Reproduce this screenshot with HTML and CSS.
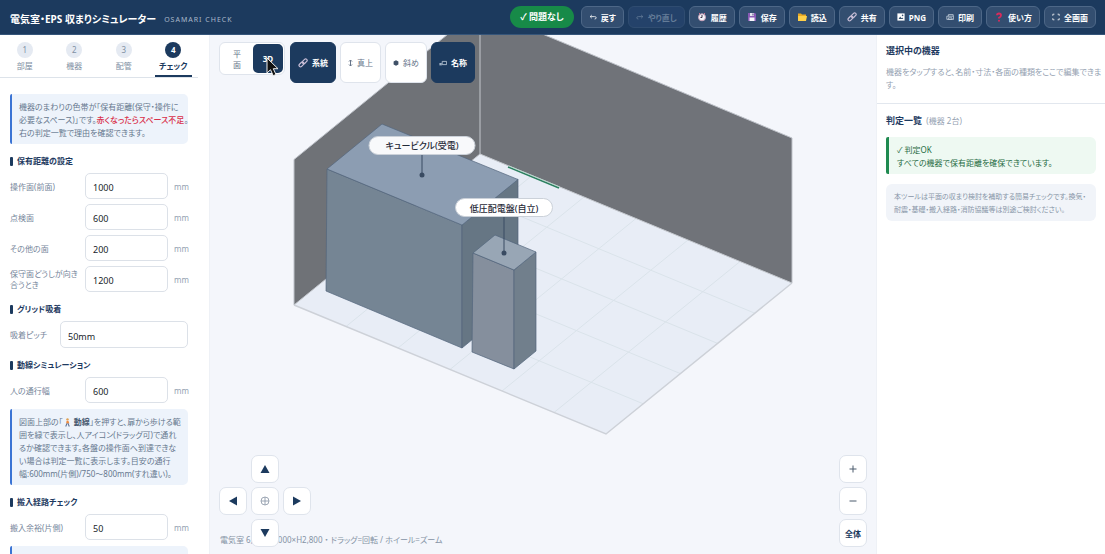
FILE: index.html
```html
<!DOCTYPE html>
<html lang="ja">
<head>
<meta charset="utf-8">
<meta name="viewport" content="width=device-width, initial-scale=1">
<title>電気室・EPS 収まりシミュレーター</title>
<link rel="stylesheet" href="styles.css">
</head>
<body>
<header class="topbar">
  <h1 class="title">電気室・EPS 収まりシミュレーター</h1>
  <span class="subtitle">OSAMARI CHECK</span>
  <span class="status">✓ 問題なし</span>
  <nav class="actions">
    <button class="action" type="button"><svg class="ico small" viewBox="0 0 10 10"><path d="M3.500 2.500 1.500 4.500l2 2M1.500 4.500H7q2 0 2 1.500T7 7.500" fill="none" stroke="currentColor"/></svg>戻す</button>
    <button class="action" type="button" disabled><svg class="ico small" viewBox="0 0 10 10"><path d="M6.500 2.500l2 2-2 2M8.500 4.500H3q-2 0-2 1.500T3 7.500" fill="none" stroke="currentColor"/></svg>やり直し</button>
    <button class="action" type="button"><svg class="ico" viewBox="0 0 10 10"><circle cx="5" cy="5.300" r="3.500" fill="#f4f4f8" stroke="#c9a2ba"/><path d="M5 3v2.500H3.500" fill="none" stroke="#3b3046"/><path d="M2 2l1-1M8 2 7 1" stroke="#d5718c"/></svg>履歴</button>
    <button class="action" type="button"><svg class="ico" viewBox="0 0 10 10"><path d="M1 1h7l1 1v7H1z" fill="#8a5bb5"/><path d="M3 1h4v3H3z" fill="#e4e6f0"/><path d="M2.500 5.500h5V9h-5z" fill="#f7f7fb"/><path d="M5.500 1.500h1v2h-1z" fill="#4a3a78"/></svg>保存</button>
    <button class="action" type="button"><svg class="ico" viewBox="0 0 10 10"><path d="M1 1.500h3l1 1h4V9H1z" fill="#e9a823"/><path d="M1 4h9L9 9H1z" fill="#ffcf48"/></svg>読込</button>
    <button class="action" type="button"><svg class="ico" viewBox="0 0 10 10"><g fill="none" stroke="#c8bed7" stroke-width="1.200"><rect x="4" y="1.800" width="5.500" height="3" rx="1.500" transform="rotate(-45 6.700 3.300)"/><rect x=".7" y="5" width="5.500" height="3" rx="1.500" transform="rotate(-45 3.400 6.500)"/></g></svg>共有</button>
    <button class="action" type="button"><svg class="ico small" viewBox="0 0 10 10"><path d="M.5 .5h9v9h-9z" fill="#fff"/><path d="M2 7.500l2-3 1.500 2 1-1 1.500 2z" fill="#34506f"/><circle cx="7" cy="3" r="1" fill="#34506f"/></svg>PNG</button>
    <button class="action" type="button"><svg class="ico small" viewBox="0 0 10 10"><path d="M3 4V2h6v2M1 4h8.500v4H1zM3 6h4.500v2H3z" fill="none" stroke="#c4cfdc"/></svg>印刷</button>
    <button class="action" type="button"><svg class="ico" viewBox="0 0 10 10"><path d="M3 3.300Q3 1.500 5 1.500t2 1.800T5 5.800v.7" fill="none" stroke="#d92b5c" stroke-width="1.800"/><circle cx="5" cy="8.700" r="1" fill="#d92b5c"/></svg>使い方</button>
    <button class="action" type="button"><svg class="ico small" viewBox="0 0 10 10"><path d="M1 3.500V1.500h2M7 1.500h2v2M9 6.500v2H7M3 8.500H1v-2" fill="none" stroke="currentColor"/></svg>全画面</button>
  </nav>
</header>

<div class="workspace">
  <aside class="sidebar">
    <nav class="steps">
      <a class="step" href="#room"><span class="num">1</span>部屋</a>
      <a class="step" href="#equipment"><span class="num">2</span>機器</a>
      <a class="step" href="#piping"><span class="num">3</span>配管</a>
      <a class="step current" href="#check"><span class="num">4</span>チェック</a>
    </nav>
    <div class="settings" id="check">
      <p class="note intro">機器のまわりの色帯が「保有距離(保守・操作に<br>必要なスペース)」です。<span class="alert">赤くなったらスペース不足</span>。<br>右の判定一覧で理由を確認できます。</p>
      <h2 class="section">保有距離の設定</h2>
      <div class="fields">
        <div class="field"><label for="front">操作面(前面)</label><input id="front" type="text" value="1000"><span class="unit">mm</span></div>
        <div class="field"><label for="inspect">点検面</label><input id="inspect" type="text" value="600"><span class="unit">mm</span></div>
        <div class="field"><label for="other">その他の面</label><input id="other" type="text" value="200"><span class="unit">mm</span></div>
        <div class="field"><label for="facing">保守面どうしが向き合うとき</label><input id="facing" type="text" value="1200"><span class="unit">mm</span></div>
      </div>
      <h2 class="section">グリッド吸着</h2>
      <div class="field wide"><label for="pitch">吸着ピッチ</label><select id="pitch"><option>50mm</option></select></div>
      <h2 class="section">動線シミュレーション</h2>
      <div class="field"><label for="person">人の通行幅</label><input id="person" type="text" value="600"><span class="unit">mm</span></div>
      <p class="note after">図面上部の「<svg class="walker" viewBox="0 0 10 10"><circle cx="5" cy="1.500" r="1.300" fill="#e0a050"/><path d="M4 3h2l1 3H3.500z" fill="#f08a3c"/><path d="M4.500 6 3 9.500M5.500 6 7 9.500" stroke="#5b6f95" stroke-width="1.200"/></svg> <strong>動線</strong>」を押すと、扉から歩ける範囲を緑で表示し、人アイコン(ドラッグ可)で通れるか確認できます。各盤の操作面へ到達できない場合は判定一覧に表示します。目安の通行幅:600mm(片側)/750〜800mm(すれ違い)。</p>
      <h2 class="section">搬入経路チェック</h2>
      <div class="field"><label for="margin">搬入余裕(片側)</label><input id="margin" type="text" value="50"><span class="unit">mm</span></div>
      <div class="note after"></div>
    </div>
  </aside>

  <main class="stage">
    <svg class="scene" viewBox="0 0 666 519" preserveAspectRatio="xMidYMid slice" role="img" aria-label="電気室の3D表示">
      <g transform="translate(-210 -35)">
        <path d="M480 154 792 283 606 434 294 305z" fill="#e8edf6"/>
        <path d="M532 175.500 346 326.500M584 197 398 348M636 218.500 450 369.500M688 240 502 391M740 261.500 554 412.500M442.800 184.200 754.800 313.200M405.600 214.400 717.600 343.400M368.400 244.600 680.400 373.600M331.200 274.800 643.200 403.800" stroke="#dae3ea" fill="none"/>
        <path d="M294 305 606 434 792 283" fill="none" stroke="#cdd1d8" stroke-width="1.500"/>
        <path d="M480 8 294 159.500V305L480 154z" fill="#6f7277"/>
        <path d="M480 8 792 138V283L480 154z" fill="#707379"/>
        <path d="M294 305V159.500L480 8 792 138V283" fill="none" stroke="#bfc3ca"/>
        <path d="M480 8V154L792 283M480 154 294 305" fill="none" stroke="#c4c8ce"/>
        <path d="M508 167 559 188" stroke="#2c8060" stroke-width="1.500"/>
        <path d="M509 166 560 187" stroke="#b4dccb" stroke-width=".7"/>
        <g stroke="#53667c" stroke-width=".7" stroke-linejoin="round">
          <path d="M327 169 462 225V348L326 291z" fill="#758594"/>
          <path d="M462 225 518 179V302L462 348z" fill="#667684"/>
          <path d="M382 124 518 179.500 462 225 327 169z" fill="#8c9db2"/>
          <path d="M473 253 514 270V369L472 352z" fill="#858f9d"/>
          <path d="M514 270 536 252V351L514 369z" fill="#717f8c"/>
          <path d="M495 235 536 252 514 270 473 253z" fill="#98a6b5"/>
        </g>
        <path d="M422 154V175M504 216V253" stroke="#394b62"/>
        <circle cx="422" cy="175" r="2.500" fill="#394b62"/>
        <circle cx="504" cy="253" r="2.500" fill="#394b62"/>
        <rect x="369" y="136.500" width="106" height="18" rx="9" fill="#f8f9fb" stroke="#cbd1d9"/>
        <rect x="455.500" y="198.500" width="97" height="18" rx="9" fill="#fff" stroke="#cbd1d9"/>
        <text class="tag" x="422" y="149">キュービクル(受電)</text>
        <text class="tag" x="504" y="212">低圧配電盤(自立)</text>
      </g>
    </svg>

    <div class="viewbar">
      <div class="segment">
        <button class="seg" type="button">平面</button>
        <button class="seg on" type="button">3D</button>
      </div>
      <button class="view on" type="button"><svg class="ico" viewBox="0 0 10 10"><g fill="none" stroke="#c8bed7" stroke-width="1.200"><rect x="4" y="1.800" width="5.500" height="3" rx="1.500" transform="rotate(-45 6.700 3.300)"/><rect x=".7" y="5" width="5.500" height="3" rx="1.500" transform="rotate(-45 3.400 6.500)"/></g></svg>系統</button>
      <button class="view" type="button"><svg class="ico thin" viewBox="0 0 5 10"><path d="M2.500 2v6M1 3.500 2.500 2 4 3.500M1 6.500 2.500 8 4 6.500" fill="none" stroke="currentColor"/></svg>真上</button>
      <button class="view" type="button"><svg class="ico dot" viewBox="0 0 10 10"><path d="M5 .5 9 2.700V7.300L5 9.500 1 7.300V2.700z" fill="#3f5067"/></svg>斜め</button>
      <button class="view on" type="button"><svg class="ico small" viewBox="0 0 10 10"><path d="M4 3h5.500v4H4z" fill="none" stroke="#c4cfdc"/><path d="M.5 5h3v3h-3z" fill="#9eb0c4"/></svg>名称</button>
    </div>
    <svg class="cursor" viewBox="0 0 14 20"><path d="M1 1v15l3.500-3.300 2.700 6 2.800-1.200-2.700-5.800H12z" fill="#111" stroke="#eee"/></svg>

    <p class="hint">電気室 6,000×5,000×H2,800 ・ ドラッグ=回転 / ホイール=ズーム</p>
    <div class="pad">
      <button class="key up" type="button" aria-label="上"><svg viewBox="0 0 10 10"><path d="M5 1 9.500 9h-9z" fill="currentColor"/></svg></button>
      <button class="key left" type="button" aria-label="左"><svg viewBox="0 0 10 10"><path d="M1 5l8-4.500v9z" fill="currentColor"/></svg></button>
      <button class="key mid" type="button" aria-label="中央"><svg viewBox="0 0 10 10"><path d="M5 1v8M1 5h8" stroke="#8793a3" stroke-width=".8"/><circle cx="5" cy="5" r="4" fill="none" stroke="#8793a3" stroke-width=".8"/></svg></button>
      <button class="key right" type="button" aria-label="右"><svg viewBox="0 0 10 10"><path d="M9 5 1 .5v9z" fill="currentColor"/></svg></button>
      <button class="key down" type="button" aria-label="下"><svg viewBox="0 0 10 10"><path d="M5 9 .5 1h9z" fill="currentColor"/></svg></button>
    </div>
    <div class="zoom">
      <button class="key" type="button" aria-label="拡大"><svg viewBox="0 0 10 10"><path d="M5 1.500v7M1.500 5h7" stroke="#4b5a6d"/></svg></button>
      <button class="key" type="button" aria-label="縮小"><svg viewBox="0 0 10 10"><path d="M1.500 5h7" stroke="#4b5a6d"/></svg></button>
      <button class="key" type="button">全体</button>
    </div>
  </main>

  <aside class="inspector">
    <section class="block">
      <h2 class="heading">選択中の機器</h2>
      <p class="empty">機器をタップすると、名前・寸法・各面の種類をここで編集できます。</p>
    </section>
    <section class="block">
      <h2 class="heading">判定一覧 <span class="count">(機器 2台)</span></h2>
      <p class="verdict">✓ 判定OK<br>すべての機器で保有距離を確保できています。</p>
      <p class="disclaimer">本ツールは平面の収まり検討を補助する簡易チェックです。換気・耐震・基礎・搬入経路・消防協議等は別途ご検討ください。</p>
    </section>
  </aside>
</div>
</body>
</html>
```

FILE: styles.css
```css
* { box-sizing: border-box; }

body {
  margin: 0;
  height: 100vh;
  display: flex;
  flex-direction: column;
  overflow: hidden;
  background: #fff;
  color: #1e3a5f;
  font-family: "Noto Sans", "Noto Sans CJK JP", sans-serif;
  font-size: 8px;
  line-height: 13px;
  font-feature-settings: "palt";
}

h1, h2, p { margin: 0; }

button, input, select {
  font: inherit;
  font-feature-settings: inherit;
  color: inherit;
}

svg { flex: none; }

.topbar {
  display: flex;
  align-items: center;
  flex: none;
  height: 35px;
  padding: 0 9px 0 10px;
  background: #1c3a5e;
  border-bottom: 1px solid #35557a;
  color: #fff;
  white-space: nowrap;
}
.title { padding-top: 4px; font-size: 10px; line-height: 16px; font-weight: 700; }
.subtitle { margin-left: 8px; padding-top: 4px; font-size: 7px; letter-spacing: 1px; color: #a9b8ca; }
.status {
  margin-left: auto;
  margin-right: 7px;
  padding: 0 10px;
  border-radius: 11px;
  background: #178a48;
  font-size: 9px;
  line-height: 22px;
  font-weight: 700;
}
.actions { display: flex; gap: 4px; }
.action {
  display: flex;
  align-items: center;
  gap: 4px;
  height: 22px;
  padding: 0 7px;
  border: 1px solid #4d6787;
  border-radius: 6px;
  background: #334e70;
  color: #fff;
  font-weight: 700;
}
.action:disabled { background: #24426a; border-color: #2f4c70; color: #647c98; }
.ico { width: 10px; height: 10px; }
.ico.small { width: 8px; height: 8px; }
.ico.dot { width: 6px; height: 6px; }
.ico.thin { width: 5px; height: 10px; }

.workspace { flex: 1; min-height: 0; display: flex; }

.sidebar {
  flex: none;
  width: 210px;
  padding-right: 11px;
  border-right: 1px solid #eef1f6;
  overflow: hidden;
}
.steps {
  display: grid;
  grid-template-columns: repeat(4, 1fr);
  border-bottom: 1px solid #dde3ea;
}
.step {
  display: flex;
  flex-direction: column;
  align-items: center;
  gap: 1px;
  height: 42px;
  margin: 0 6px;
  padding-top: 7px;
  border-bottom: 2px solid transparent;
  color: #8090a3;
  text-decoration: none;
  white-space: nowrap;
}
.num {
  width: 16px;
  border-radius: 8px;
  background: #e5eaf2;
  line-height: 16px;
  text-align: center;
}
.step.current { color: #1c3a5e; border-color: #1c3a5e; font-weight: 700; }
.step.current .num { background: #1c3a5e; color: #fff; }

.settings { padding: 16px 10px 0; }
.note {
  padding: 6px 7px 5px;
  border-left: 2px solid #3b74d4;
  border-radius: 2px 5px 5px 2px;
  background: #edf3fb;
  color: #66788e;
}
.note.intro { white-space: nowrap; }
.note.after { min-height: 50px; margin-top: 6px; }
.note strong { color: #45586f; }
.note .alert { color: #d9304a; font-weight: 500; }
.walker { width: 9px; height: 9px; vertical-align: -2px; }

.section {
  display: flex;
  align-items: center;
  gap: 4px;
  margin: 11px 0 6px;
  font-size: 8px;
  line-height: 12px;
  font-weight: 700;
}
.section::before { content: ""; width: 3px; height: 9px; border-radius: 1px; background: #1c3a5e; }

.fields { display: grid; gap: 5px; }
.field {
  display: grid;
  grid-template-columns: 69px 1fr 14px;
  gap: 6px;
  align-items: center;
  color: #75859a;
  line-height: 11px;
}
.field.wide { grid-template-columns: 44px 1fr; }
.field input, .field select {
  appearance: none;
  width: 100%;
  min-width: 0;
  height: 26px;
  padding: 4px 7px 1px;
  border: 1px solid #dce1e8;
  border-radius: 5px;
  background: #fff;
  color: #20242b;
  font-size: 9px;
}
.field select { height: 27px; }
.unit { color: #94a1b1; }

.stage {
  position: relative;
  flex: 1;
  min-width: 0;
  background: #f4f6fb;
  overflow: hidden;
}
.scene { display: block; width: 100%; height: 100%; }
.tag { font-size: 9px; font-weight: 500; fill: #1f2937; text-anchor: middle; }

.viewbar {
  position: absolute;
  top: 7px;
  left: 9px;
  display: flex;
  align-items: flex-start;
  gap: 4px;
}
.segment {
  display: grid;
  grid-template-columns: 32px 30px;
  height: 33px;
  margin-right: 1px;
  padding: 1px;
  border: 1px solid #dfe4ec;
  border-radius: 6px;
  background: #fff;
}
.seg {
  padding: 0 12px;
  border: 0;
  border-radius: 5px;
  background: none;
  color: #66758a;
  line-height: 11px;
}
.seg.on { padding: 0; background: #1c3a5e; color: #fff; font-weight: 700; }
.view {
  display: flex;
  align-items: center;
  gap: 4px;
  height: 41px;
  padding: 0 7px;
  border: 1px solid #dfe4ec;
  border-radius: 6px;
  background: #fff;
  color: #66758a;
}
.view.on { border-color: #1c3a5e; background: #1c3a5e; color: #fff; font-weight: 700; }
.cursor { position: absolute; top: 22px; left: 56px; width: 14px; height: 20px; }

.hint { position: absolute; bottom: 8px; left: 10px; color: #8593a5; white-space: nowrap; }
.pad {
  position: absolute;
  bottom: 7px;
  left: 9px;
  display: grid;
  grid-template-columns: repeat(3, 28px);
  grid-template-areas: ". up ." "left mid right" ". down .";
  gap: 4px;
}
.up { grid-area: up; }
.left { grid-area: left; }
.mid { grid-area: mid; }
.right { grid-area: right; }
.down { grid-area: down; }
.zoom {
  position: absolute;
  right: 9px;
  bottom: 7px;
  display: grid;
  grid-template-columns: 28px;
  gap: 4px;
}
.key {
  display: flex;
  align-items: center;
  justify-content: center;
  height: 28px;
  padding: 0;
  border: 1px solid #dfe4ec;
  border-radius: 7px;
  background: #fff;
  color: #1c3a5e;
  font-weight: 700;
}
.key svg { width: 10px; height: 10px; }

.inspector { flex: none; width: 229px; border-left: 1px solid #eef1f6; }
.block { padding: 9px; }
.block + .block { padding-top: 10px; border-top: 1px solid #e2e7ee; }
.heading { font-size: 9px; line-height: 14px; font-weight: 700; }
.count { margin-left: 2px; color: #94a1b1; font-size: 8px; font-weight: 400; }
.empty { margin: 7px -7px 3px 0; color: #94a1b1; }
.verdict {
  margin-top: 9px;
  padding: 6px 8px 5px;
  border-left: 3px solid #1f8a50;
  border-radius: 2px 6px 6px 2px;
  background: #eef9f2;
  color: #1f6b43;
}
.disclaimer {
  margin-top: 10px;
  padding: 6px 8px 5px;
  border-radius: 6px;
  background: #f1f4f9;
  color: #8896a8;
  font-size: 7px;
}
```
